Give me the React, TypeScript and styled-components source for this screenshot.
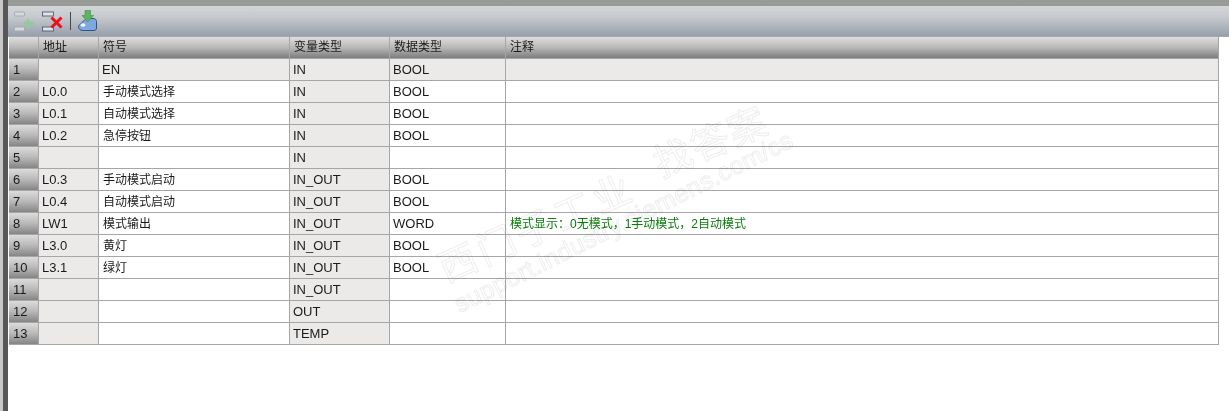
import React from "react";
import styled, { createGlobalStyle } from "styled-components";

const GlobalStyle = createGlobalStyle`
  html, body {
    margin: 0;
    padding: 0;
    background: #fff;
    overflow: hidden;
  }
`;

const columns = "30px 60px 191px 100px 116px 713px";

const rows = [
  { n: "1", addr: "", symbol: "EN", kind: "IN", type: "BOOL", note: "", locked: true },
  { n: "2", addr: "L0.0", symbol: "手动模式选择", kind: "IN", type: "BOOL", note: "" },
  { n: "3", addr: "L0.1", symbol: "自动模式选择", kind: "IN", type: "BOOL", note: "" },
  { n: "4", addr: "L0.2", symbol: "急停按钮", kind: "IN", type: "BOOL", note: "" },
  { n: "5", addr: "", symbol: "", kind: "IN", type: "", note: "" },
  { n: "6", addr: "L0.3", symbol: "手动模式启动", kind: "IN_OUT", type: "BOOL", note: "" },
  { n: "7", addr: "L0.4", symbol: "自动模式启动", kind: "IN_OUT", type: "BOOL", note: "" },
  { n: "8", addr: "LW1", symbol: "模式输出", kind: "IN_OUT", type: "WORD", note: "模式显示：0无模式，1手动模式，2自动模式" },
  { n: "9", addr: "L3.0", symbol: "黄灯", kind: "IN_OUT", type: "BOOL", note: "" },
  { n: "10", addr: "L3.1", symbol: "绿灯", kind: "IN_OUT", type: "BOOL", note: "" },
  { n: "11", addr: "", symbol: "", kind: "IN_OUT", type: "", note: "" },
  { n: "12", addr: "", symbol: "", kind: "OUT", type: "", note: "" },
  { n: "13", addr: "", symbol: "", kind: "TEMP", type: "", note: "" },
];

const isLatin = (s: string) => /^[\x20-\x7e]+$/.test(s);

const Page = styled.div`
  position: relative;
  width: 1229px;
  height: 411px;
  display: flex;
  overflow: hidden;
  background: #fff;
  font-family: "Liberation Sans", "Noto Sans CJK SC", sans-serif;
  font-size: 12px;
  color: #1a1a1a;
`;

const LeftEdge = styled.div`
  flex: none;
  width: 3px;
  background: #c9c9c9;
  border-right: 5px solid #575757;
`;

const Main = styled.div`
  flex: none;
  width: 1221px;
  display: flex;
  flex-direction: column;
`;

const TopStrip = styled.div`
  height: 6px;
  background: #999b99;
`;

const Toolbar = styled.div`
  height: 31px;
  display: flex;
  align-items: center;
  padding: 0 0 2px 4px;
  box-sizing: border-box;
  gap: 4px;
  background: linear-gradient(#d2d6d9, #c6cace 35%, #989fac 97%, #b4b4b4);
`;

const ToolDivider = styled.span`
  width: 1px;
  height: 18px;
  margin: 0 2px;
  background: #3f4850;
`;

const Grid = styled.div`
  width: 1210px;
  margin-left: 1px;
  display: grid;
  grid-template-columns: ${columns};
  grid-auto-rows: 22px;
`;

const HeaderCell = styled.div`
  box-sizing: border-box;
  height: 22px;
  padding: 3px 0 0 4px;
  line-height: 14px;
  background: linear-gradient(#dedede, #b8b8b8 50%, #7d7d7d);
  border-right: 1px solid #a6a6a6;
  border-bottom: 1px solid #a6a6a6;
  white-space: nowrap;
`;

const RowNumber = styled.div`
  box-sizing: border-box;
  padding: 4px 0 0 4px;
  font-size: 13px;
  line-height: 14px;
  background: linear-gradient(#dcdcdc, #b8b8b8 50%, #858585);
  border-right: 1px solid #a6a6a6;
  border-bottom: 1px solid #a6a6a6;
`;

const Cell = styled.div<{ $grey?: boolean; $green?: boolean; $latin?: boolean }>`
  box-sizing: border-box;
  padding: 4px 0 0 ${(p) => (p.$latin ? "3px" : "4px")};
  line-height: 14px;
  font-size: ${(p) => (p.$latin ? "13px" : "12px")};
  white-space: nowrap;
  overflow: hidden;
  color: ${(p) => (p.$green ? "#0a7d0a" : "#1a1a1a")};
  background: ${(p) => (p.$grey ? "#ebeae8" : "#fff")};
  border-right: 1px solid #a6a6a6;
  border-bottom: 1px solid #a6a6a6;
`;

const Watermark = styled.div<{ $x: number; $y: number; $size: number; $angle: number; $spacing: number }>`
  position: absolute;
  left: ${(p) => p.$x}px;
  top: ${(p) => p.$y}px;
  font-size: ${(p) => p.$size}px;
  letter-spacing: ${(p) => p.$spacing}px;
  transform: rotate(${(p) => p.$angle}deg);
  transform-origin: left center;
  line-height: 1;
  white-space: nowrap;
  color: transparent;
  -webkit-text-stroke: 1px #eeeeee;
  mix-blend-mode: multiply;
  pointer-events: none;
`;

function InsertIcon() {
  return (
    <svg width="24" height="22" viewBox="0 0 24 22">
      <rect x="2.500" y="2" width="10" height="4" rx="1" fill="#d5dadf" stroke="#a4abb3" />
      <rect x="2.500" y="17" width="10" height="4" rx="1" fill="#d5dadf" stroke="#a4abb3" />
      <path d="M11 13.500 17 8v3.500h5v4.500h-5v3.500z" fill="#92c99d" />
    </svg>
  );
}

function DeleteIcon() {
  return (
    <svg width="24" height="22" viewBox="0 0 24 22">
      <rect x="2.500" y="2" width="11" height="4" fill="#dfe3e7" stroke="#3e5266" strokeWidth="0.8" />
      <rect x="2.500" y="17" width="11" height="4" fill="#dfe3e7" stroke="#3e5266" strokeWidth="0.8" />
      <path d="M11.500 7.500l10 10M21.500 7.500l-10 10" stroke="#ef0f1c" strokeWidth="3" />
    </svg>
  );
}

function ExportIcon() {
  return (
    <svg width="22" height="23" viewBox="0 0 22 23">
      <path d="M7 11.500c1-1.500 3-2 5-2h4c2 0 3.500 1 3.500 3v6.500c0 1.500-1 2.500-2.500 2.500H6c-2.500 0-4.500-1.500-4.500-3.500 0-1 .5-2 1.500-2.500z" fill="#7ea9de" stroke="#2f5486" />
      <path d="M3.500 16a2.500 1.800 0 0 1 5 0 2.500 1.800 0 0 1-5 0z" fill="#f2f5fa" />
      <path d="M8 1.500h5.500v5h3L10.700 13 5 6.500h3z" fill="#5db35f" stroke="#3f8f45" strokeWidth="0.6" />
    </svg>
  );
}

export default function App() {
  return (
    <Page>
      <GlobalStyle />
      <LeftEdge />
      <Main>
        <TopStrip />
        <Toolbar>
          <InsertIcon />
          <DeleteIcon />
          <ToolDivider />
          <ExportIcon />
        </Toolbar>
        <Grid>
          <HeaderCell />
          <HeaderCell>地址</HeaderCell>
          <HeaderCell>符号</HeaderCell>
          <HeaderCell>变量类型</HeaderCell>
          <HeaderCell>数据类型</HeaderCell>
          <HeaderCell>注释</HeaderCell>
          {rows.map((r) => (
            <React.Fragment key={r.n}>
              <RowNumber>{r.n}</RowNumber>
              <Cell $grey $latin>{r.addr}</Cell>
              <Cell $grey={r.locked} $latin={isLatin(r.symbol)}>{r.symbol}</Cell>
              <Cell $grey $latin>{r.kind}</Cell>
              <Cell $grey={r.locked} $latin>{r.type}</Cell>
              <Cell $grey={r.locked} $green>{r.note}</Cell>
            </React.Fragment>
          ))}
        </Grid>
      </Main>
      <Watermark $x={441} $y={252} $size={38} $angle={-24} $spacing={4}>西门子工业</Watermark>
      <Watermark $x={656} $y={147} $size={38} $angle={-23} $spacing={2}>找答案</Watermark>
      <Watermark $x={456} $y={293} $size={25} $angle={-26.5} $spacing={0.4}>support.industry.siemens.com/cs</Watermark>
    </Page>
  );
}
